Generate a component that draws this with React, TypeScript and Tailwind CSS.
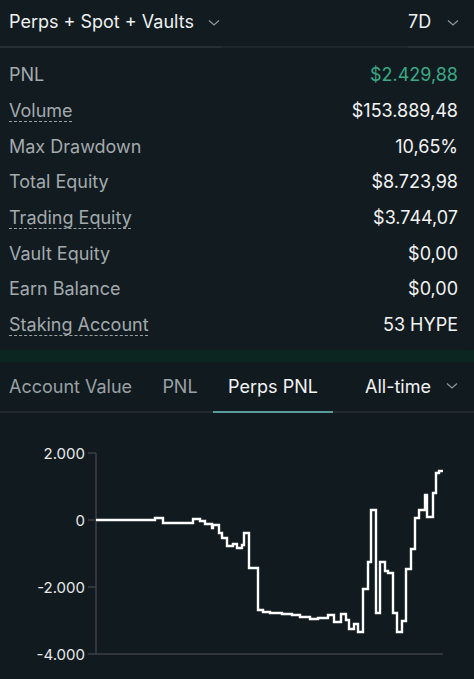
import React from "react";

const rows = [
  { label: "PNL", value: "$2.429,88", dashed: false, green: true },
  { label: "Volume", value: "$153.889,48", dashed: true },
  { label: "Max Drawdown", value: "10,65%", dashed: false },
  { label: "Total Equity", value: "$8.723,98", dashed: false },
  { label: "Trading Equity", value: "$3.744,07", dashed: true },
  { label: "Vault Equity", value: "$0,00", dashed: false },
  { label: "Earn Balance", value: "$0,00", dashed: false },
  { label: "Staking Account", value: "53 HYPE", dashed: true },
];

// step chart points [x, y] in page coordinates (chart svg starts at y=413)
const pts: [number, number][] = [
  [96, 520], [155, 520], [155, 518], [163, 518], [163, 523], [193, 523], [193, 519],
  [200, 519], [200, 521], [205, 521], [205, 524], [212, 524], [212, 528], [213, 528],
  [213, 525], [219, 525], [219, 533], [222, 533], [222, 538], [227, 538], [227, 546],
  [233, 546], [233, 544], [237, 544], [237, 548], [242, 548], [242, 545], [244, 545],
  [244, 533], [249, 533], [249, 568], [258, 568], [258, 610], [263, 610], [263, 612],
  [270, 612], [270, 613], [282, 613], [282, 614], [292, 614], [292, 615], [300, 615],
  [300, 617], [310, 617], [310, 619], [318, 619], [318, 618], [328, 618], [328, 615],
  [334, 615], [334, 622], [341, 622], [341, 614], [346, 614], [346, 620], [349, 620],
  [349, 629], [354, 629], [354, 624], [358, 624], [358, 632], [363, 632], [363, 589],
  [368, 589], [368, 562], [371, 562], [371, 510], [376, 510], [376, 613], [380, 613],
  [380, 562], [385, 562], [385, 571], [388, 571], [388, 573], [393, 573], [393, 613],
  [397, 613], [397, 632], [402, 632], [402, 621], [406, 621], [406, 569], [411, 569],
  [411, 549], [415, 549], [415, 518], [419, 518], [419, 510], [425, 510], [425, 495],
  [427, 495], [427, 517], [433, 517], [433, 493], [436, 493], [436, 473], [439, 473],
  [439, 471], [443, 471],
];

function Chevron() {
  return (
    <svg width="12" height="8" viewBox="0 0 12 8" className="shrink-0">
      <polyline points="1,1.5 6,6 11,1.5" fill="none" stroke="#8d9599" strokeWidth="1.3" />
    </svg>
  );
}

export default function App() {
  const top = 413;
  const d = pts.map(([x, y], i) => `${i === 0 ? "M" : "L"}${x},${y - top}`).join(" ");
  const ticks = [
    { label: "2.000", y: 453 },
    { label: "0", y: 520 },
    { label: "-2.000", y: 587 },
    { label: "-4.000", y: 654 },
  ];

  return (
    <div className="w-[474px] h-[679px] overflow-hidden bg-[#111a1f] text-[#eef0f0] font-['Inter',sans-serif]">
      {/* Card */}
      <div className="bg-[#121b20] rounded-br-[10px]">
        <div className="flex items-end h-[48px]">
          <div className="w-[221px] h-[48px] flex items-center justify-between pl-[9px] pr-[1px] border-b-2 border-[#262f33]">
            <span className="text-[18px] pb-[3px]">Perps + Spot + Vaults</span>
            <Chevron />
          </div>
          <div className="flex-1 h-[46px] border-b-2 border-[#1e272b]" />
          <div className="w-[66px] h-[48px] flex items-center justify-between pr-[15px] border-b-2 border-[#262f33]">
            <span className="text-[18px] pb-[3px]">7D</span>
            <Chevron />
          </div>
        </div>

        <div className="pt-[9px] pb-[7px]">
          {rows.map((r) => (
            <div key={r.label} className="h-[35.7px] flex items-center justify-between pl-[9px] pr-[16px] text-[18px]">
              <span
                className={
                  r.dashed
                    ? "text-[#a3aaad] underline decoration-dashed decoration-[#9aa1a4] underline-offset-[4px] decoration-1"
                    : "text-[#a3aaad]"
                }
              >
                {r.label}
              </span>
              <span className={r.green ? "text-[#3aa985]" : "text-[#f2f3f3]"}>{r.value}</span>
            </div>
          ))}
        </div>
      </div>

      {/* Strip */}
      <div className="h-[12px] bg-[#0b2520]" />

      {/* Tabs */}
      <div className="flex items-stretch h-[51px] border-b-2 border-[#222a2d] text-[18px]">
        <div className="w-[147px] pl-[9px] flex items-center text-[#9aa1a4]">Account Value</div>
        <div className="w-[66px] flex items-center justify-center text-[#9aa1a4]">PNL</div>
        <div className="w-[120px] flex items-center justify-center text-[#f2f3f3] relative">
          Perps PNL
          <div className="absolute left-0 right-0 -bottom-[2px] h-[2px] bg-[#5a9b9d]" />
        </div>
        <div className="flex-1 flex items-center justify-between pl-[32px] pr-[16px] text-[#f2f3f3]">
          <span>All-time</span>
          <Chevron />
        </div>
      </div>

      {/* Chart */}
      <svg width="474" height="264" className="block">
        <line x1="96" y1={453 - top} x2="96" y2={654 - top} stroke="#3b4043" strokeWidth="1.5" />
        <line x1="96" y1={654 - top} x2="443" y2={654 - top} stroke="#3b4043" strokeWidth="1.5" />
        {ticks.map((t) => (
          <g key={t.label}>
            <line x1="88" y1={t.y - top} x2="96" y2={t.y - top} stroke="#3b4043" strokeWidth="1.5" />
            <text
              x="85"
              y={t.y - top + 5.5}
              textAnchor="end"
              fontSize="15"
              fill="#e6e8e8"
              fontFamily="Inter, sans-serif"
            >
              {t.label}
            </text>
          </g>
        ))}
        <path d={d} fill="none" stroke="#ffffff" strokeWidth="2.4" strokeLinejoin="miter" />
      </svg>
    </div>
  );
}
